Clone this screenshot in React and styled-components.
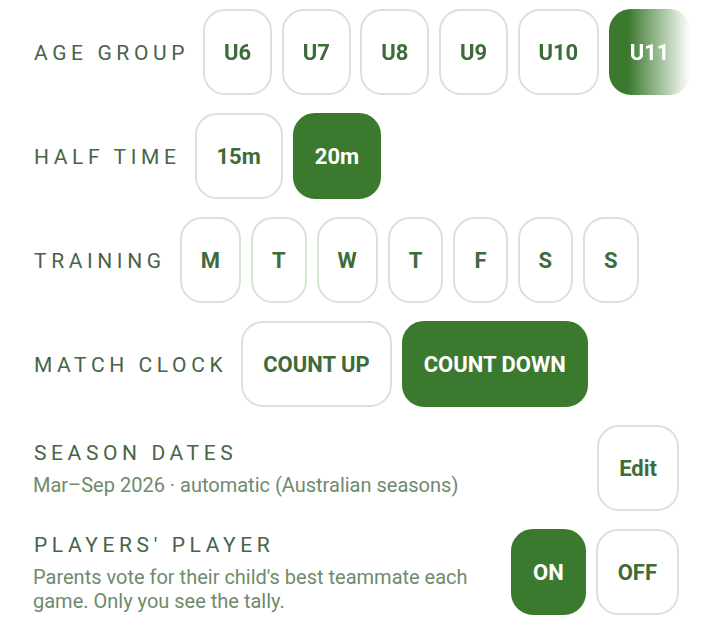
import React from "react";
import styled, { createGlobalStyle } from "styled-components";

const Global = createGlobalStyle`
  html, body { margin: 0; padding: 0; background: #ffffff; }
  body { font-family: Roboto, "Noto Sans", "Liberation Sans", sans-serif; }
  * { box-sizing: border-box; }
`;

const Page = styled.div`
  display: flex;
  flex-direction: column;
  gap: 18px;
  padding: 9px 41px 0 34px;
  width: 720px;
`;

const Row = styled.div`
  display: flex;
  align-items: center;
  gap: 14px;
  min-height: 86px;
`;

const Label = styled.div`
  font-size: 21px;
  letter-spacing: 4.6px;
  color: #476447;
  text-transform: uppercase;
  white-space: nowrap;
  line-height: 24px;
  padding-top: 2px;
`;

const Scroller = styled.div`
  display: flex;
  gap: 9.5px;
  flex: 1;
  min-width: 0;
  overflow: hidden;
  margin-right: -11px;
  -webkit-mask-image: linear-gradient(to right, #000 calc(100% - 62px), transparent);
  mask-image: linear-gradient(to right, #000 calc(100% - 62px), transparent);
`;

const Group = styled.div`
  display: flex;
  gap: 10px;
  flex-shrink: 0;
`;

const Chip = styled.button`
  flex-shrink: 0;
  height: 86px;
  padding: 0 ${(p) => (p.$narrow ? 19 : 20)}px;
  border-radius: 22px;
  border: 2px solid ${(p) => (p.$active ? "#3b7a2e" : "#d4e6d1")};
  background: ${(p) => (p.$active ? "#3b7a2e" : "#ffffff")};
  color: ${(p) => (p.$active ? "#ffffff" : "#3e6b3a")};
  font-family: Roboto, "Noto Sans", "Liberation Sans", sans-serif;
  font-weight: 700;
  font-size: 22px;
  white-space: nowrap;
  cursor: pointer;
`;

const TextBlock = styled.div`
  flex: 1;
  min-width: 0;
  display: flex;
  flex-direction: column;
  gap: 8px;
`;

const Sub = styled.div`
  font-size: 20px;
  line-height: 24px;
  color: #6f8a6c;
  margin-left: -1px;
`;

const ageGroups = ["U6", "U7", "U8", "U9", "U10", "U11"];
const days = ["M", "T", "W", "T", "F", "S", "S"];

export default function App() {
  return (
    <>
      <Global />
      <Page>
        <Row>
          <Label>Age Group</Label>
          <Scroller>
            {ageGroups.map((a) => (
              <Chip key={a} $narrow $active={a === "U11"}>{a}</Chip>
            ))}
          </Scroller>
        </Row>
        <Row>
          <Label>Half Time</Label>
          <Group>
            <Chip>15m</Chip>
            <Chip $active>20m</Chip>
          </Group>
        </Row>
        <Row>
          <Label>Training</Label>
          <Group>
            {days.map((d, i) => (
              <Chip key={i} $narrow>{d}</Chip>
            ))}
          </Group>
        </Row>
        <Row>
          <Label>Match Clock</Label>
          <Group>
            <Chip>COUNT UP</Chip>
            <Chip $active>COUNT DOWN</Chip>
          </Group>
        </Row>
        <Row>
          <TextBlock>
            <Label>Season Dates</Label>
            <Sub>Mar–Sep 2026 · automatic (Australian seasons)</Sub>
          </TextBlock>
          <Chip>Edit</Chip>
        </Row>
        <Row>
          <TextBlock>
            <Label>Players' Player</Label>
            <Sub>Parents vote for their child's best teammate each game. Only you see the tally.</Sub>
          </TextBlock>
          <Group>
            <Chip $active>ON</Chip>
            <Chip>OFF</Chip>
          </Group>
        </Row>
      </Page>
    </>
  );
}
